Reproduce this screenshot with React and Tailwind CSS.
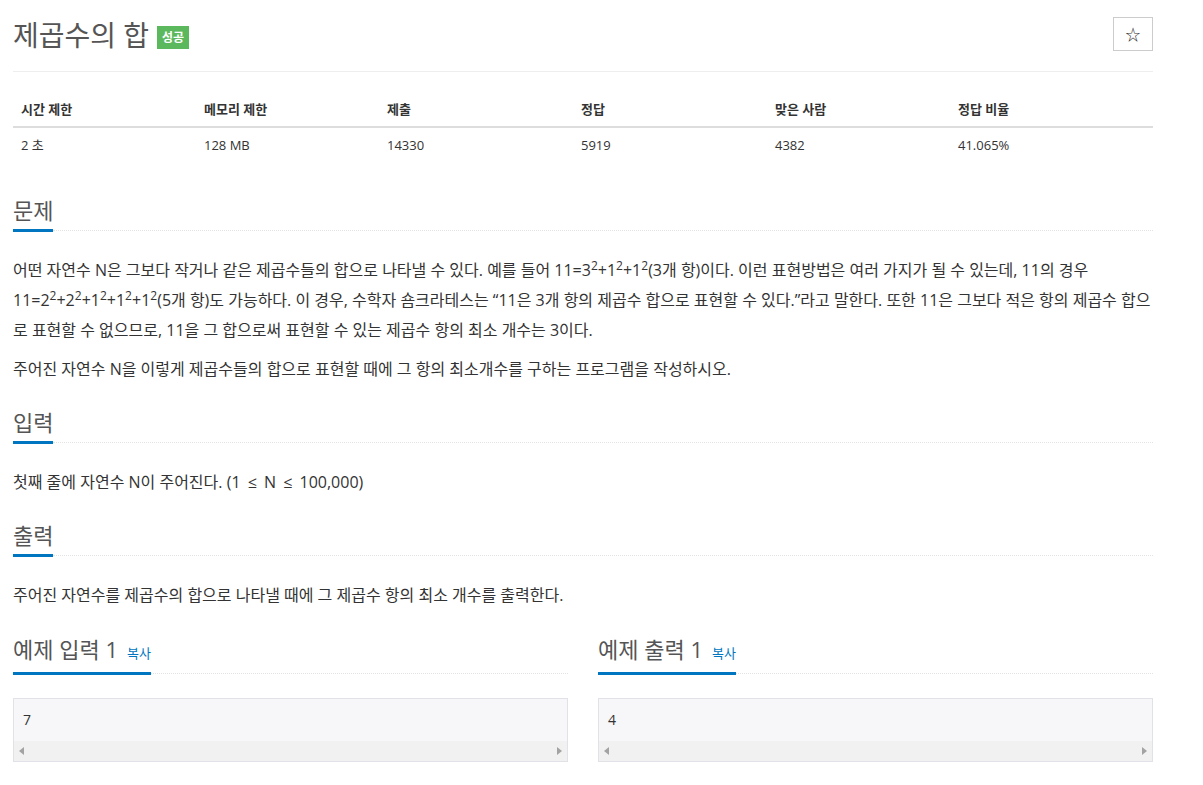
const font = { fontFamily: '"Open Sans", "Noto Sans CJK KR", sans-serif' };

function Headline({ children, extra }) {
  return (
    <div className="flex items-end">
      <h2 className="flex items-baseline border-b-[3px] border-[#0076c0] pb-[4px] text-[22px] leading-[30px] font-normal text-[#555]">
        {children}
        {extra && <span className="ml-[9px] text-[13px] text-[#0076c0]">{extra}</span>}
      </h2>
      <div className="mb-[1px] flex-1 border-b border-dotted border-[#e3e3e3]" />
    </div>
  );
}

function Sample({ title, value }) {
  return (
    <div>
      <Headline extra="복사">{title}</Headline>
      <div className="mt-[23px] border border-[#e1e1e8] bg-[#f7f7f9]">
        <div className="px-[9px] pt-[11px] pb-[11px] text-[14px] leading-[20px] text-[#333]">{value}</div>
        <div className="flex h-[20px] items-center justify-between bg-[#f1f1f1] px-[5px]">
          <svg width="6" height="8" viewBox="0 0 6 8"><path d="M5 0L0 4l5 4z" fill="#a3a3a3" /></svg>
          <svg width="6" height="8" viewBox="0 0 6 8"><path d="M1 0l5 4-5 4z" fill="#a3a3a3" /></svg>
        </div>
      </div>
    </div>
  );
}

const stats = [
  ['시간 제한', '2 초'],
  ['메모리 제한', '128 MB'],
  ['제출', '14330'],
  ['정답', '5919'],
  ['맞은 사람', '4382'],
  ['정답 비율', '41.065%'],
];

export default function App() {
  return (
    <div className="min-h-screen bg-white px-[13px] pb-[24px] text-[#333]" style={font}>
      <div className="w-[1140px]">
        {/* Title */}
        <div className="flex items-start justify-between pt-[17px] pb-[18px] border-b border-[#eee]">
          <div className="flex items-center">
            <h1 className="text-[28px] leading-[36px] font-normal text-[#555]">제곱수의 합</h1>
            <span className="ml-[8px] mt-[5px] flex h-[23px] items-center bg-[#5cb85c] px-[5px] text-[12px] font-bold text-white">성공</span>
          </div>
          <button className="flex h-[34px] w-[40px] items-center justify-center border border-[#ccc] bg-white text-[15px] text-[#333]">☆</button>
        </div>

        {/* Stats table */}
        <div className="mt-[20px] grid grid-cols-[183px_183px_194px_194px_183px_1fr]">
          {stats.map(([h]) => (
            <div key={h} className="border-b-2 border-[#ddd] px-[8px] py-[8px] text-[13px] leading-[18px] font-bold">{h}</div>
          ))}
          {stats.map(([h, v]) => (
            <div key={h + v} className="px-[8px] py-[8px] text-[13px] leading-[18px]">{v}</div>
          ))}
        </div>

        {/* 문제 */}
        <section className="mt-[33px]">
          <Headline>문제</Headline>
          <div className="mt-[23px] text-[16px] leading-[30px]">
            <p>
              어떤 자연수 N은 그보다 작거나 같은 제곱수들의 합으로 나타낼 수 있다. 예를 들어 11=3<sup>2</sup>+1<sup>2</sup>+1<sup>2</sup>(3개 항)이다. 이런 표현방법은 여러 가지가 될 수 있는데, 11의 경우 11=2<sup>2</sup>+2<sup>2</sup>+1<sup>2</sup>+1<sup>2</sup>+1<sup>2</sup>(5개 항)도 가능하다. 이 경우, 수학자 숌크라테스는 “11은 3개 항의 제곱수 합으로 표현할 수 있다.”라고 말한다. 또한 11은 그보다 적은 항의 제곱수 합으로 표현할 수 없으므로, 11을 그 합으로써 표현할 수 있는 제곱수 항의 최소 개수는 3이다.
            </p>
            <p className="mt-[9px]">주어진 자연수 N을 이렇게 제곱수들의 합으로 표현할 때에 그 항의 최소개수를 구하는 프로그램을 작성하시오.</p>
          </div>
        </section>

        {/* 입력 */}
        <section className="mt-[23px]">
          <Headline>입력</Headline>
          <p className="mt-[23px] text-[16px] leading-[30px]">
            첫째 줄에 자연수 N이 주어진다. (1 <span className="mx-[3px]">≤</span> N <span className="mx-[3px]">≤</span> 100,000)
          </p>
        </section>

        {/* 출력 */}
        <section className="mt-[23px]">
          <Headline>출력</Headline>
          <p className="mt-[23px] text-[16px] leading-[30px]">주어진 자연수를 제곱수의 합으로 나타낼 때에 그 제곱수 항의 최소 개수를 출력한다.</p>
        </section>

        {/* 예제 */}
        <div className="mt-[24px] grid grid-cols-2 gap-[30px]">
          <Sample title="예제 입력 1" value="7" />
          <Sample title="예제 출력 1" value="4" />
        </div>
      </div>
    </div>
  );
}
